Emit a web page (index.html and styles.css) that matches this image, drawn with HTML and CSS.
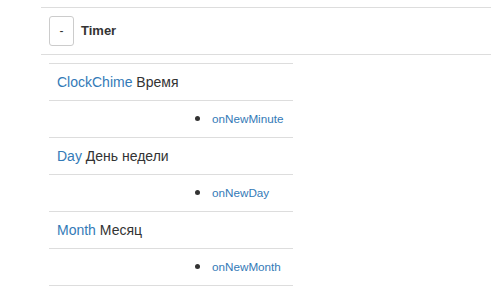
FILE: index.html
```html
<!DOCTYPE html>
<html>
<head>
<meta charset="utf-8">
<link rel="stylesheet" href="styles.css">
</head>
<body>
<div class="page">
  <div class="header">
    <button class="btn">-</button>
    <span class="title">Timer</span>
  </div>
  <table class="tbl">
    <tr><td><a class="link">ClockChime</a> Время</td></tr>
    <tr><td class="events"><span class="dot"></span><a class="link">onNewMinute</a></td></tr>
    <tr><td><a class="link">Day</a> День недели</td></tr>
    <tr><td class="events"><span class="dot"></span><a class="link">onNewDay</a></td></tr>
    <tr><td><a class="link">Month</a> Месяц</td></tr>
    <tr><td class="events"><span class="dot"></span><a class="link">onNewMonth</a></td></tr>
  </table>
</div>
</body>
</html>
```
FILE: styles.css
```css
html, body {
  margin: 0;
  padding: 0;
  background: #fff;
}
body {
  font-family: "Liberation Sans", Arial, sans-serif;
  font-size: 14px;
  line-height: 20px;
  color: #333;
}
.page {
  padding: 7px 0 0 41px;
}
.header {
  display: flex;
  align-items: center;
  gap: 7px;
  border-top: 1px solid #ddd;
  border-bottom: 1px solid #ddd;
  padding: 8px;
  height: 30px;
}
.btn {
  box-sizing: border-box;
  width: 25px;
  height: 30px;
  padding: 0;
  font-family: inherit;
  font-size: 12px;
  color: #333;
  background: #fff;
  border: 1px solid #ccc;
  border-radius: 3px;
}
.title {
  font-weight: bold;
  font-size: 13px;
}
.tbl {
  margin: 8px 0 0 8px;
  width: 244px;
  border-collapse: collapse;
}
.tbl td {
  padding: 8px;
  height: 20px;
  border-top: 1px solid #ddd;
  border-bottom: 1px solid #ddd;
  line-height: 20px;
}
.link {
  color: #337ab7;
  text-decoration: none;
}
.tbl td.events {
  padding-left: 146px;
  font-size: 11.7px;
  line-height: 20px;
}
.dot {
  display: inline-block;
  vertical-align: middle;
  width: 5px;
  height: 5px;
  border-radius: 50%;
  background: #333;
  margin-right: 12px;
  position: relative;
  top: -1px;
}
```
